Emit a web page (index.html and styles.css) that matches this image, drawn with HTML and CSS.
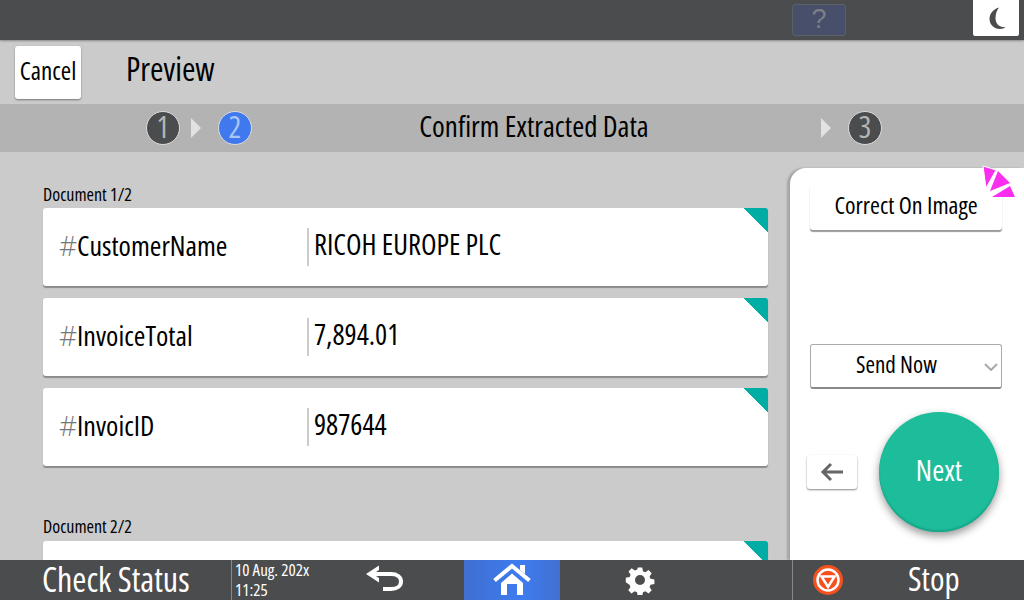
FILE: index.html
```html
<!DOCTYPE html>
<html>
<head>
<meta name="viewport" content="width=device-width, initial-scale=1">
<title>Preview</title>
<link rel="stylesheet" href="styles.css">
</head>
<body>
  <div class="screen">
    <div class="topbar">
      <div class="help">?</div>
      <div class="night">
        <svg width="24" height="24" viewBox="0 0 24 24"><path d="M15 1.500C8.500 3.500 5.500 8 5.500 13c0 5.500 4.500 10 10.500 10 2.300 0 4.200-.7 5.500-1.700-6.500.3-10-3.800-10-9 0-4.300 1.300-8 3.500-10.800z" fill="#4b4c4e"/></svg>
      </div>
    </div>

    <div class="titlebar">
      <button class="cancel">Cancel</button>
      <div class="title">Preview</div>
    </div>

    <div class="steps">
      <div class="num">1</div>
      <div class="arrow"></div>
      <div class="num current">2</div>
      <div class="step-title">Confirm Extracted Data</div>
      <div class="arrow"></div>
      <div class="num">3</div>
    </div>

    <div class="main">
      <div class="list">
        <div class="doc-label">Document 1/2</div>
        <div class="card">
          <div class="field"><span class="hash">#</span>CustomerName</div>
          <div class="value">RICOH EUROPE PLC</div>
        </div>
        <div class="card">
          <div class="field"><span class="hash">#</span>InvoiceTotal</div>
          <div class="value">7,894.01</div>
        </div>
        <div class="card">
          <div class="field"><span class="hash">#</span>InvoicID</div>
          <div class="value">987644</div>
        </div>
        <div class="doc-label second">Document 2/2</div>
        <div class="card"></div>
      </div>

      <div class="panel">
        <button class="side-btn">Correct On Image</button>
        <svg class="spark" width="36" height="38" viewBox="0 0 36 38">
          <path d="M3 3L16 7 6 25z" fill="#fb2ef0" stroke="#fff" stroke-width="1"/>
          <path d="M18 8L30 20 10 28z" fill="#fb2ef0"/>
          <path d="M30 23L35 34 12 34z" fill="#fb2ef0"/>
        </svg>
        <div class="send-select">
          <span>Send Now</span>
          <svg class="chev" width="14" height="8" viewBox="0 0 14 8"><path d="M1 1l6 6 6-6" fill="none" stroke="#aaa" stroke-width="2"/></svg>
        </div>
        <div class="actions">
          <button class="back">
            <svg width="24" height="20" viewBox="0 0 24 20"><path d="M23 10H3M11 2l-8 8 8 8" fill="none" stroke="#666" stroke-width="3"/></svg>
          </button>
          <button class="next">Next</button>
        </div>
      </div>
    </div>

    <div class="footer">
      <div class="status">Check Status</div>
      <div class="clock">10 Aug. 202x<br>11:25</div>
      <div class="foot-icon undo">
        <svg width="38" height="30" viewBox="0 0 38 30"><path d="M6 9h20c6 0 10 3 10 7.500S32 24 26 24h-8" fill="none" stroke="#fff" stroke-width="4"/><path d="M14 .5L1 9l13 8.500V13L8 9l6-4z" fill="#fff"/></svg>
      </div>
      <div class="foot-icon home">
        <svg width="40" height="34" viewBox="0 0 40 34"><path d="M2.500 17.500L20 3l17.500 14.500" fill="none" stroke="#fff" stroke-width="4"/><path d="M9 20L20 10.500 31 20v12h-6V21H15v11H9z" fill="#fff"/><path d="M28 2h5v9l-5-4z" fill="#fff"/></svg>
      </div>
      <div class="foot-icon gear">
        <svg width="30" height="30" viewBox="0 0 30 30"><path d="M12.500 1h5l.8 4.200 2.600 1.100 3.600-2.400 3.500 3.500-2.400 3.600 1.100 2.600 4.300.8v5l-4.300.8-1.100 2.600 2.400 3.600-3.500 3.500-3.600-2.400-2.600 1.100-.8 4.200h-5l-.8-4.200-2.600-1.100-3.600 2.400-3.500-3.500 2.400-3.600-1.100-2.600L-.8 17.500v-5l4.300-.8 1.100-2.600-2.400-3.600 3.500-3.500 3.600 2.400 2.600-1.100z" transform="translate(1.500 1.500) scale(.9)" fill="#fff"/><circle cx="15" cy="15" r="5" fill="#4b4c4e"/></svg>
      </div>
      <div class="stop">
        <svg width="30" height="30" viewBox="0 0 30 30"><circle cx="15" cy="15" r="15" fill="#f4511e"/><circle cx="15" cy="15" r="10.500" fill="none" stroke="#fff" stroke-width="2.500"/><path d="M8.500 11.500h13L15 22z" fill="none" stroke="#fff" stroke-width="2.500"/></svg>
        <span>Stop</span>
      </div>
    </div>
  </div>
</body>
</html>
```
FILE: styles.css
```css
* {
  box-sizing: border-box;
}

body {
  margin: 0;
  font-family: "Open Sans", "Liberation Sans", sans-serif;
  font-stretch: 75%;
  color: #000;
}

button {
  font-family: inherit;
  font-stretch: inherit;
  border: none;
  background: white;
  padding: 0;
}

.screen {
  width: 1024px;
  height: 600px;
  display: flex;
  flex-direction: column;
  overflow: hidden;
  background: #cbcbcb;
}

/* top status bar */
.topbar {
  height: 40px;
  flex: none;
  background: #4b4c4e;
  display: flex;
  box-shadow: 0 1px 2px #888;
  position: relative;
}

.help {
  width: 54px;
  height: 32px;
  margin: 4px 0 0 792px;
  background: #484f6b;
  border: 1px solid #5d6068;
  border-radius: 3px;
  color: #7d7f85;
  font-size: 27px;
  font-family: "Liberation Sans", sans-serif;
  text-align: center;
  line-height: 29px;
}

.night {
  width: 46px;
  height: 36px;
  margin-left: 127px;
  background: white;
  border-radius: 0 0 2px 2px;
  display: flex;
  align-items: center;
  justify-content: center;
}

.titlebar {
  height: 64px;
  flex: none;
  display: flex;
  align-items: center;
  padding-left: 15px;
}

.cancel {
  width: 66px;
  height: 53px;
  padding-bottom: 4px;
  border-radius: 3px;
  font-size: 25px;
  box-shadow: 0 1px 2px #777;
}

.title {
  margin: -8px 0 0 45px;
  font-size: 32.500px;
}

/* step indicator */
.steps {
  height: 48px;
  flex: none;
  background: #b3b3b3;
  display: flex;
  align-items: center;
  padding-left: 146px;
}

.num {
  width: 34px;
  height: 34px;
  border-radius: 50%;
  background: #4b4c4e;
  border: 1px solid #ddd;
  color: #b5b5b5;
  font-size: 30px;
  line-height: 29px;
  text-align: center;
}

.num.current {
  background: #4079ee;
  color: #a9c4f7;
}

.arrow {
  width: 0;
  height: 0;
  margin: 0 17px 0 11px;
  border-left: 10px solid #e2e2e2;
  border-top: 10px solid transparent;
  border-bottom: 10px solid transparent;
}

.step-title {
  width: 558px;
  padding: 0 0 5px 6px;
  text-align: center;
  font-size: 29px;
}

.main {
  flex: 1;
  min-height: 0;
  display: flex;
}

.list {
  width: 790px;
  flex: none;
  padding: 31px 22px 0 43px;
}

.doc-label {
  height: 25px;
  font-size: 18px;
  line-height: 23px;
}

.doc-label.second {
  margin-top: 49px;
  margin-bottom: 1px;
}

.card {
  height: 78px;
  background: white;
  border-radius: 3px;
  box-shadow: 0 2px 1px #8a8a8a;
  margin-bottom: 12px;
  display: flex;
  align-items: center;
  font-size: 28px;
  background-image: linear-gradient(225deg, #00ada4 17px, transparent 17.500px);
}

.field {
  width: 264px;
  padding: 0 0 4px 16px;
}

.hash {
  color: #777;
  font-stretch: 100%;
  font-weight: 300;
}

.value {
  height: 38px;
  line-height: 33px;
  padding-left: 5px;
  border-left: 2px solid #ccc;
  font-size: 28.500px;
}

/* right panel */
.panel {
  width: 234px;
  flex: none;
  margin-top: 16px;
  background: white;
  border-radius: 16px 0 0 0;
  box-shadow: -3px 0 2px #a5a5a5;
  padding: 15px 22px 0 20px;
  position: relative;
}

.side-btn {
  width: 192px;
  height: 47px;
  padding-bottom: 4px;
  display: block;
  border-radius: 3px;
  font-size: 24px;
  box-shadow: 0 2px 1px #999;
}

.spark {
  position: absolute;
  top: -5px;
  right: 8px;
}

.send-select {
  width: 192px;
  height: 45px;
  margin-top: 114px;
  padding: 0 0 4px 45px;
  border: 1px solid #aaa;
  border-bottom: 2px solid #888;
  border-radius: 3px;
  display: flex;
  align-items: center;
  font-size: 23px;
  position: relative;
}

.chev {
  position: absolute;
  right: 3px;
  top: 18px;
}

.actions {
  display: flex;
  align-items: center;
  margin: 23px 0 0 -3px;
}

.back {
  width: 50px;
  height: 34px;
  border-radius: 3px;
  box-shadow: 0 1px 2px #888;
  display: flex;
  align-items: center;
  justify-content: center;
}

.next {
  width: 120px;
  height: 120px;
  margin-left: 22px;
  padding-bottom: 6px;
  border-radius: 50%;
  background: #1dbd9b;
  color: white;
  font-size: 29px;
  box-shadow: inset 0 -2px 2px #17a488, 0 4px 8px #999;
}

/* bottom bar */
.footer {
  height: 40px;
  flex: none;
  background: #4b4c4e;
  color: white;
  display: flex;
  align-items: center;
  position: relative;
}

.status {
  width: 231px;
  padding-left: 42px;
  font-size: 34px;
  line-height: 36px;
  padding-bottom: 2px;
}

.clock {
  width: 105px;
  height: 40px;
  padding: 0 0 0 3px;
  border-left: 1px solid #888;
  font-size: 17px;
  line-height: 20px;
  white-space: nowrap;
}

.foot-icon {
  height: 40px;
  display: flex;
  align-items: center;
  justify-content: center;
}

.undo {
  width: 128px;
  padding-right: 32px;
}

.home {
  width: 96px;
  background: linear-gradient(90deg, #3f6fd0, #3e7cf0 60%, #4270d0);
}

.gear {
  width: 232px;
  padding-right: 72px;
}

.stop {
  width: 232px;
  height: 40px;
  padding-left: 20px;
  border-left: 1px solid #888;
  display: flex;
  align-items: center;
  font-size: 33px;
  line-height: 36px;
}

.stop span {
  margin-left: 65px;
  margin-bottom: 2px;
}
```
